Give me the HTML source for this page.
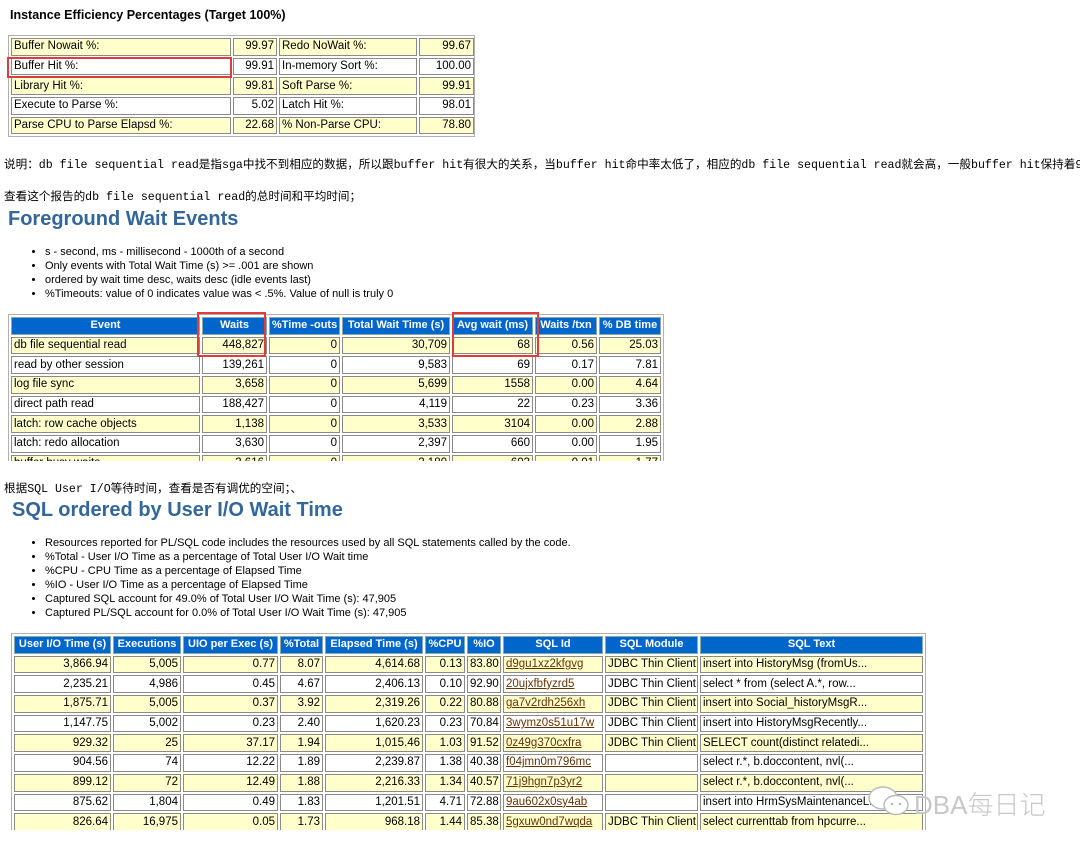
<!DOCTYPE html>
<html><head><meta charset="utf-8"><style>
body{margin:0;background:#fff;width:1080px;height:849px;overflow:hidden;position:relative;font-family:"Liberation Sans",Arial,sans-serif;}
.abs{position:absolute;}
table{border-collapse:separate;border-spacing:2px;table-layout:fixed;font-size:11.5px;color:#000;}
.tw{position:absolute;border:1px solid #b0b0b0;padding:0;overflow:hidden;background:#fff}
td,th{box-sizing:border-box;height:17.7px;padding:0 2px;border:1px solid #8a8a8a;white-space:nowrap;overflow:hidden;line-height:15px}
th{background:#0066cc;color:#fff;font-weight:bold;font-size:11px;text-align:center;border-color:#8aa}
tr.y td{background:#ffffcc}
td.r{text-align:right}
a{color:#663300;text-decoration:underline}
.mono{font-family:"Liberation Mono","Noto Sans CJK SC",monospace;font-size:11.6px;white-space:nowrap}
h2{margin:0;color:#336699;font-size:20px;font-weight:bold;}
ul{margin:0;padding-left:45px;font-size:11px;line-height:14px}
.red{position:absolute;border:2px solid #e03c3c;box-sizing:border-box}
</style></head><body>

<div class="abs" style="left:10px;top:8px;font-size:12.5px;font-weight:bold">Instance Efficiency Percentages (Target 100%)</div>

<div class="tw" style="left:8px;top:35px;width:465px">
<table style="width:465px">
<col style="width:220px"><col style="width:44px"><col style="width:138px"><col style="width:55px">
<tr class="y"><td>Buffer Nowait %:</td><td class="r">99.97</td><td>Redo NoWait %:</td><td class="r">99.67</td></tr>
<tr><td>Buffer Hit %:</td><td class="r">99.91</td><td>In-memory Sort %:</td><td class="r">100.00</td></tr>
<tr class="y"><td>Library Hit %:</td><td class="r">99.81</td><td>Soft Parse %:</td><td class="r">99.91</td></tr>
<tr><td>Execute to Parse %:</td><td class="r">5.02</td><td>Latch Hit %:</td><td class="r">98.01</td></tr>
<tr class="y"><td>Parse CPU to Parse Elapsd %:</td><td class="r">22.68</td><td>% Non-Parse CPU:</td><td class="r">78.80</td></tr>
</table></div>
<div class="red" style="left:7px;top:57px;width:225px;height:21px"></div>

<div class="abs mono" style="left:4px;top:156px">说明：db file sequential read是指sga中找不到相应的数据，所以跟buffer hit有很大的关系，当buffer hit命中率太低了，相应的db file sequential read就会高，一般buffer hit保持着99%</div>
<div class="abs mono" style="left:4px;top:188px">查看这个报告的db file sequential read的总时间和平均时间；</div>

<h2 class="abs" style="left:8px;top:208px">Foreground Wait Events</h2>
<ul class="abs" style="left:0;top:245px;width:600px">
<li>s - second, ms - millisecond - 1000th of a second</li>
<li>Only events with Total Wait Time (s) &gt;= .001 are shown</li>
<li>ordered by wait time desc, waits desc (idle events last)</li>
<li>%Timeouts: value of 0 indicates value was &lt; .5%. Value of null is truly 0</li>
</ul>

<div class="tw" style="left:8px;top:314px;width:654px;height:146px;border-bottom:none">
<table style="width:654px">
<col style="width:189px"><col style="width:65px"><col style="width:71px"><col style="width:108px"><col style="width:81px"><col style="width:62px"><col style="width:62px">
<tr><th>Event</th><th>Waits</th><th>%Time -outs</th><th>Total Wait Time (s)</th><th>Avg wait (ms)</th><th>Waits /txn</th><th>% DB time</th></tr>
<tr class="y"><td>db file sequential read</td><td class="r">448,827</td><td class="r">0</td><td class="r">30,709</td><td class="r">68</td><td class="r">0.56</td><td class="r">25.03</td></tr>
<tr><td>read by other session</td><td class="r">139,261</td><td class="r">0</td><td class="r">9,583</td><td class="r">69</td><td class="r">0.17</td><td class="r">7.81</td></tr>
<tr class="y"><td>log file sync</td><td class="r">3,658</td><td class="r">0</td><td class="r">5,699</td><td class="r">1558</td><td class="r">0.00</td><td class="r">4.64</td></tr>
<tr><td>direct path read</td><td class="r">188,427</td><td class="r">0</td><td class="r">4,119</td><td class="r">22</td><td class="r">0.23</td><td class="r">3.36</td></tr>
<tr class="y"><td>latch: row cache objects</td><td class="r">1,138</td><td class="r">0</td><td class="r">3,533</td><td class="r">3104</td><td class="r">0.00</td><td class="r">2.88</td></tr>
<tr><td>latch: redo allocation</td><td class="r">3,630</td><td class="r">0</td><td class="r">2,397</td><td class="r">660</td><td class="r">0.00</td><td class="r">1.95</td></tr>
<tr class="y"><td>buffer busy waits</td><td class="r">3,616</td><td class="r">0</td><td class="r">2,180</td><td class="r">603</td><td class="r">0.01</td><td class="r">1.77</td></tr>
</table></div>
<div class="red" style="left:197px;top:312px;width:69px;height:45px"></div>
<div class="red" style="left:452px;top:312px;width:87px;height:45px"></div>

<div class="abs mono" style="left:4px;top:480px">根据SQL User I/O等待时间，查看是否有调优的空间；、</div>
<h2 class="abs" style="left:12px;top:499px">SQL ordered by User I/O Wait Time</h2>
<ul class="abs" style="left:0;top:536px;width:700px">
<li>Resources reported for PL/SQL code includes the resources used by all SQL statements called by the code.</li>
<li>%Total - User I/O Time as a percentage of Total User I/O Wait time</li>
<li>%CPU - CPU Time as a percentage of Elapsed Time</li>
<li>%IO - User I/O Time as a percentage of Elapsed Time</li>
<li>Captured SQL account for 49.0% of Total User I/O Wait Time (s): 47,905</li>
<li>Captured PL/SQL account for 0.0% of Total User I/O Wait Time (s): 47,905</li>
</ul>

<div class="tw" style="left:11px;top:633px;width:913px;height:196px;border-bottom:none">
<table style="width:913px">
<col style="width:97px"><col style="width:68px"><col style="width:95px"><col style="width:43px"><col style="width:98px"><col style="width:40px"><col style="width:34px"><col style="width:100px"><col style="width:93px"><col style="width:223px">
<tr><th>User I/O Time (s)</th><th>Executions</th><th>UIO per Exec (s)</th><th>%Total</th><th>Elapsed Time (s)</th><th>%CPU</th><th>%IO</th><th>SQL Id</th><th>SQL Module</th><th>SQL Text</th></tr>
<tr class="y"><td class="r">3,866.94</td><td class="r">5,005</td><td class="r">0.77</td><td class="r">8.07</td><td class="r">4,614.68</td><td class="r">0.13</td><td class="r">83.80</td><td><a>d9gu1xz2kfgvg</a></td><td>JDBC Thin Client</td><td>insert into HistoryMsg (fromUs...</td></tr>
<tr><td class="r">2,235.21</td><td class="r">4,986</td><td class="r">0.45</td><td class="r">4.67</td><td class="r">2,406.13</td><td class="r">0.10</td><td class="r">92.90</td><td><a>20ujxfbfyzrd5</a></td><td>JDBC Thin Client</td><td>select * from (select A.*, row...</td></tr>
<tr class="y"><td class="r">1,875.71</td><td class="r">5,005</td><td class="r">0.37</td><td class="r">3.92</td><td class="r">2,319.26</td><td class="r">0.22</td><td class="r">80.88</td><td><a>ga7v2rdh256xh</a></td><td>JDBC Thin Client</td><td>insert into Social_historyMsgR...</td></tr>
<tr><td class="r">1,147.75</td><td class="r">5,002</td><td class="r">0.23</td><td class="r">2.40</td><td class="r">1,620.23</td><td class="r">0.23</td><td class="r">70.84</td><td><a>3wymz0s51u17w</a></td><td>JDBC Thin Client</td><td>insert into HistoryMsgRecently...</td></tr>
<tr class="y"><td class="r">929.32</td><td class="r">25</td><td class="r">37.17</td><td class="r">1.94</td><td class="r">1,015.46</td><td class="r">1.03</td><td class="r">91.52</td><td><a>0z49g370cxfra</a></td><td>JDBC Thin Client</td><td>SELECT count(distinct relatedi...</td></tr>
<tr><td class="r">904.56</td><td class="r">74</td><td class="r">12.22</td><td class="r">1.89</td><td class="r">2,239.87</td><td class="r">1.38</td><td class="r">40.38</td><td><a>f04jmn0m796mc</a></td><td></td><td>select r.*, b.doccontent, nvl(...</td></tr>
<tr class="y"><td class="r">899.12</td><td class="r">72</td><td class="r">12.49</td><td class="r">1.88</td><td class="r">2,216.33</td><td class="r">1.34</td><td class="r">40.57</td><td><a>71j9hgn7p3yr2</a></td><td></td><td>select r.*, b.doccontent, nvl(...</td></tr>
<tr><td class="r">875.62</td><td class="r">1,804</td><td class="r">0.49</td><td class="r">1.83</td><td class="r">1,201.51</td><td class="r">4.71</td><td class="r">72.88</td><td><a>9au602x0sy4ab</a></td><td></td><td>insert into HrmSysMaintenanceL...</td></tr>
<tr class="y"><td class="r">826.64</td><td class="r">16,975</td><td class="r">0.05</td><td class="r">1.73</td><td class="r">968.18</td><td class="r">1.44</td><td class="r">85.38</td><td><a>5gxuw0nd7wqda</a></td><td>JDBC Thin Client</td><td>select currenttab from hpcurre...</td></tr>
</table></div>

<svg class="abs" style="left:866px;top:784px" width="48" height="34" viewBox="0 0 48 34">
<ellipse cx="17" cy="14" rx="14" ry="11" fill="#fff" stroke="#bbb" stroke-width="1.5"/>
<ellipse cx="30" cy="21" rx="12" ry="9.5" fill="#fff" stroke="#bbb" stroke-width="1.5"/>
<circle cx="26" cy="20" r="1.3" fill="#bbb"/><circle cx="34" cy="20" r="1.3" fill="#bbb"/>
</svg>
<div class="abs" style="left:914px;top:785px;font-size:26px;color:#c8c8c8;font-family:'Liberation Sans','Noto Sans CJK SC',sans-serif;font-weight:300">DBA每日记</div>
</body></html>
